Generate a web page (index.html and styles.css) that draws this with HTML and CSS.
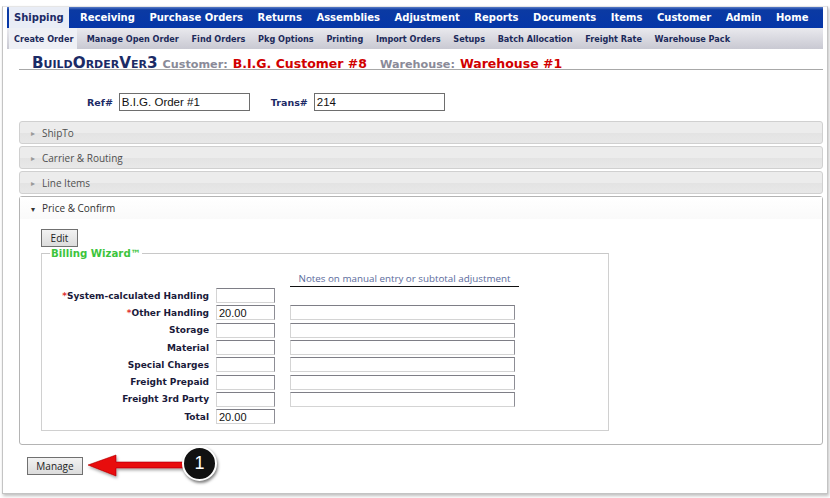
FILE: index.html
```html
<!DOCTYPE html>
<html>
<head>
<meta charset="utf-8">
<link rel="stylesheet" href="styles.css">
</head>
<body>
<div class="window">
  <div class="topnav">
    <span class="tab active">Shipping</span>
    <span class="tab">Receiving</span>
    <span class="tab">Purchase Orders</span>
    <span class="tab">Returns</span>
    <span class="tab">Assemblies</span>
    <span class="tab">Adjustment</span>
    <span class="tab">Reports</span>
    <span class="tab">Documents</span>
    <span class="tab">Items</span>
    <span class="tab">Customer</span>
    <span class="tab">Admin</span>
    <span class="tab">Home</span>
  </div>
  <div class="subnav">
    <span class="sub active">Create Order</span>
    <span class="sub">Manage Open Order</span>
    <span class="sub">Find Orders</span>
    <span class="sub">Pkg Options</span>
    <span class="sub">Printing</span>
    <span class="sub">Import Orders</span>
    <span class="sub">Setups</span>
    <span class="sub">Batch Allocation</span>
    <span class="sub">Freight Rate</span>
    <span class="sub">Warehouse Pack</span>
  </div>
  <div class="content">
    <div class="titlebar">
      <span class="pagename">BuildOrderVer3</span>
      <span class="lbl">Customer:</span>
      <span class="val">B.I.G. Customer #8</span>
      <span class="lbl wh">Warehouse:</span>
      <span class="val">Warehouse #1</span>
    </div>
    <div class="refrow">
      <span class="flabel">Ref#</span>
      <span class="input wide">B.I.G. Order #1</span>
      <span class="flabel trans">Trans#</span>
      <span class="input wide">214</span>
    </div>
    <div class="acc closed"><span class="arrow">&#9656;</span>ShipTo</div>
    <div class="acc closed"><span class="arrow">&#9656;</span>Carrier &amp; Routing</div>
    <div class="acc closed"><span class="arrow">&#9656;</span>Line Items</div>
    <div class="acc open">
      <div class="acchead"><span class="arrow down">&#9662;</span>Price &amp; Confirm</div>
      <div class="accbody">
        <span class="btn edit">Edit</span>
        <fieldset class="wizard">
          <legend>Billing Wizard™</legend>
          <div class="noteshead">Notes on manual entry or subtotal adjustment</div>
          <div class="brow"><span class="blabel"><i>*</i>System-calculated Handling</span><span class="input small"></span></div>
          <div class="brow"><span class="blabel"><i>*</i>Other Handling</span><span class="input small">20.00</span><span class="input note"></span></div>
          <div class="brow"><span class="blabel">Storage</span><span class="input small"></span><span class="input note"></span></div>
          <div class="brow"><span class="blabel">Material</span><span class="input small"></span><span class="input note"></span></div>
          <div class="brow"><span class="blabel">Special Charges</span><span class="input small"></span><span class="input note"></span></div>
          <div class="brow"><span class="blabel">Freight Prepaid</span><span class="input small"></span><span class="input note"></span></div>
          <div class="brow"><span class="blabel">Freight 3rd Party</span><span class="input small"></span><span class="input note"></span></div>
          <div class="brow"><span class="blabel">Total</span><span class="input small">20.00</span></div>
        </fieldset>
      </div>
    </div>
    <div class="footer">
      <span class="btn manage">Manage</span>
      <div class="callout">
        <svg class="arrowsvg" width="100" height="30" viewBox="0 0 100 30">
          <defs>
            <filter id="sh" x="-20%" y="-50%" width="140%" height="200%">
              <feDropShadow dx="1" dy="2" stdDeviation="1.5" flood-color="#000" flood-opacity="0.35"/>
            </filter>
          </defs>
          <g filter="url(#sh)">
            <polygon points="2,13 30,3 30,10 98,10 98,16 30,16 30,24" fill="#e8080a" stroke="#b00000" stroke-width="0.6"/>
          </g>
        </svg>
        <span class="badge">1</span>
      </div>
    </div>
  </div>
</div>
</body>
</html>
```

FILE: styles.css
```css
html, body {
  margin: 0;
  padding: 0;
  background: #ffffff;
}
body {
  width: 830px;
  height: 498px;
  overflow: hidden;
  font-family: "DejaVu Sans", Verdana, sans-serif;
}
.window {
  margin: 6px 2px 0 2px;
  height: 488px;
  box-sizing: border-box;
  border: 1px solid #c4c4c4;
  border-top-color: #e6e6e6;
  box-shadow: 1px 2px 3px rgba(0,0,0,0.25);
  padding: 0 4px 0 4px;
  background: #fff;
}
.topnav {
  display: flex;
  align-items: stretch;
  height: 21px;
  background: linear-gradient(#5a7cc6 0, #0b3aa3 3px, #0536a8 100%);
  padding-left: 2px;
  white-space: nowrap;
}
.tab {
  color: #fff;
  font-weight: bold;
  font-size: 10px;
  padding: 0 7.25px;
  display: flex;
  align-items: center;
  white-space: nowrap;
}
.tab.active {
  background: #e9edf6;
  color: #1c2a66;
  padding: 0 5px;
  margin-right: 4px;
}
.subnav {
  display: flex;
  height: 21px;
  background: linear-gradient(#e9e9ee, #c9c9d2);
  padding-left: 2px;
  align-items: stretch;
  white-space: nowrap;
}
.sub {
  font-weight: bold;
  font-size: 8.15px;
  color: #1c2a5a;
  display: flex;
  align-items: center;
  padding: 0 6.35px;
}
.sub.active {
  background: #eef0f5;
  padding: 0 4px 0 5px;
  margin-right: 3px;
}
.content {
  padding: 0 0 0 12px;
}
.titlebar {
  display: flex;
  align-items: baseline;
  border-bottom: 1px solid #a8a8a8;
  height: 21px;
  padding-left: 13px;
  box-sizing: border-box;
  padding-top: 5px;
  white-space: nowrap;
}
.pagename {
  font-variant: small-caps;
  font-weight: bold;
  font-size: 15.2px;
  color: #1b2b66;
  margin-right: 5px;
}
.lbl {
  font-weight: bold;
  font-size: 11.2px;
  color: #8a8a98;
  margin-right: 5px;
}
.lbl.wh {
  margin-left: 13px;
}
.val {
  font-weight: bold;
  font-size: 12.5px;
  color: #d10000;
}
.refrow {
  display: flex;
  align-items: center;
  height: 18px;
  margin-top: 23px;
  padding-left: 68px;
  margin-bottom: 10px;
}
.flabel {
  font-weight: bold;
  font-size: 9.5px;
  color: #1c2a66;
  margin-right: 6px;
}
.flabel.trans {
  margin-left: 21px;
}
.input {
  display: inline-flex;
  align-items: center;
  box-sizing: border-box;
  border: 1px solid #7e7e86;
  border-right-color: #8d8d95;
  border-bottom-color: #d4d4d4;
  border-left-color: #d4d4d4;
  background: #fff;
  font-family: "Liberation Sans", Arial, sans-serif;
  font-size: 11.5px;
  color: #111;
  padding-left: 2px;
}
.input.wide {
  width: 131px;
  height: 18px;
  border: 1px solid #6e6e6e;
}
.acc {
  border: 1px solid #d0d0d0;
  border-radius: 3px;
  margin-bottom: 2px;
}
.acc.closed {
  height: 23px;
  box-sizing: border-box;
  background: linear-gradient(#ececec 0, #ececec 50%, #e3e3e3 51%, #e8e8e8 100%);
  display: flex;
  align-items: center;
  font-family: "Open Sans", "Segoe UI", sans-serif;
  font-size: 10px;
  color: #505050;
  padding-left: 11px;
}
.arrow {
  font-size: 8px;
  color: #999;
  width: 11px;
  display: inline-block;
}
.arrow.down {
  color: #333;
}
.acc.open {
  border-color: #b4b4b4;
  height: 249px;
  box-sizing: border-box;
  background: #fff;
}
.acchead {
  height: 22px;
  display: flex;
  align-items: center;
  padding-left: 11px;
  font-family: "Open Sans", "Segoe UI", sans-serif;
  font-size: 10px;
  color: #333;
  background: linear-gradient(#fff, #fafafa);
}
.accbody {
  padding: 8px 0 0 21px;
}
.btn {
  display: inline-flex;
  align-items: center;
  justify-content: center;
  box-sizing: border-box;
  border: 1px solid #707070;
  background: linear-gradient(#f2f2f2, #dcdcdc);
  font-family: "Open Sans", "Segoe UI", sans-serif;
  font-size: 10px;
  color: #222;
}
.btn.edit {
  width: 37px;
  height: 18px;
}
.wizard {
  margin: 1px 0 0 0;
  width: 568px;
  height: 183px;
  box-sizing: border-box;
  border: 1px solid #d0d0d0;
  border-top-color: #c8c8c8;
  padding: 0;
}
.wizard legend {
  font-weight: bold;
  font-size: 10.2px;
  color: #3cc43c;
  padding: 0 1px;
  margin-left: 8px;
}
.noteshead {
  margin-left: 248px;
  width: 229px;
  border-bottom: 1px solid #111;
  font-family: "Open Sans", "Segoe UI", sans-serif;
  font-size: 9.8px;
  color: #5a6a9c;
  text-align: center;
  height: 13px;
  line-height: 11px;
  margin-top: 14px;
  margin-bottom: 0;
}
.brow {
  display: flex;
  align-items: center;
  height: 17.3px;
}
.blabel {
  width: 167px;
  text-align: right;
  font-weight: bold;
  font-size: 9px;
  color: #1a1a3a;
  margin-right: 7px;
}
.blabel i {
  font-style: normal;
  color: #e03030;
}
.input.small {
  width: 59px;
  height: 15px;
  font-size: 11px;
}
.input.note {
  width: 225px;
  height: 15px;
  margin-left: 15px;
}
.footer {
  display: flex;
  align-items: center;
  margin-top: 9px;
  height: 22px;
}
.btn.manage {
  width: 56px;
  height: 18px;
  margin-left: 8px;
  margin-top: 1px;
}
.callout {
  display: flex;
  align-items: center;
  margin-left: 3px;
}
.arrowsvg {
  display: block;
  margin-top: 3px;
}
.badge {
  width: 35px;
  height: 35px;
  border-radius: 50%;
  background: #111;
  border: 2px solid #fff;
  box-shadow: 1px 2px 3px rgba(0,0,0,0.5);
  color: #fff;
  font-family: "Liberation Sans", Arial, sans-serif;
  font-size: 18px;
  display: flex;
  align-items: center;
  justify-content: center;
  margin-left: -4px;
  margin-top: -4px;
  box-sizing: border-box;
}
```
